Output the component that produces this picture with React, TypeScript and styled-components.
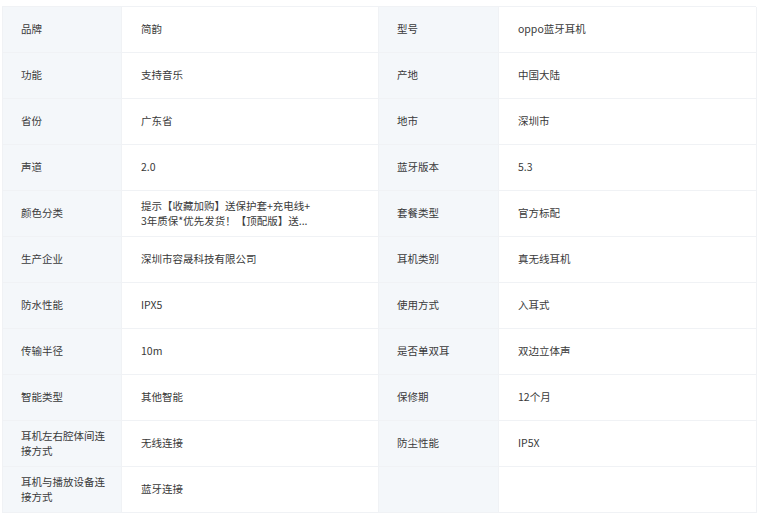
import React from "react";
import styled, { createGlobalStyle } from "styled-components";

const Global = createGlobalStyle`
  html, body { margin: 0; padding: 0; background: #ffffff; }
  body { font-family: "Noto Sans CJK SC", "Noto Sans", sans-serif; }
`;

const Page = styled.div`
  padding: 6px 0 0 2px;
`;

const Table = styled.div`
  display: grid;
  grid-template-columns: 119px 257px 120px 258px;
  grid-auto-rows: 46px;
  width: 754px;
  border-top: 1px solid #f0f2f5;
  border-left: 1px solid #f0f2f5;
  box-sizing: border-box;
`;

const Cell = styled.div<{ $label?: boolean }>`
  display: flex;
  align-items: center;
  box-sizing: border-box;
  padding: ${(p) => (p.$label ? "0 12px 2px 18px" : "0 12px 2px 19px")};
  background: ${(p) => (p.$label ? "#f4f7fa" : "#ffffff")};
  border-right: 1px solid #f0f2f5;
  border-bottom: 1px solid #f0f2f5;
  color: #3a3a3a;
  font-size: 10.5px;
  line-height: 15px;
`;

const Value = styled.span`
  white-space: pre-line;
`;

const rows: [string, string, string, string][] = [
  ["品牌", "简韵", "型号", "oppo蓝牙耳机"],
  ["功能", "支持音乐", "产地", "中国大陆"],
  ["省份", "广东省", "地市", "深圳市"],
  ["声道", "2.0", "蓝牙版本", "5.3"],
  [
    "颜色分类",
    "提示【收藏加购】送保护套+充电线+\n3年质保*优先发货！【顶配版】送...",
    "套餐类型",
    "官方标配",
  ],
  ["生产企业", "深圳市容晟科技有限公司", "耳机类别", "真无线耳机"],
  ["防水性能", "IPX5", "使用方式", "入耳式"],
  ["传输半径", "10m", "是否单双耳", "双边立体声"],
  ["智能类型", "其他智能", "保修期", "12个月"],
  ["耳机左右腔体间连接方式", "无线连接", "防尘性能", "IP5X"],
  ["耳机与播放设备连接方式", "蓝牙连接", "", ""],
];

export default function App() {
  return (
    <>
      <Global />
      <Page>
        <Table>
          {rows.map((r, i) => (
            <React.Fragment key={i}>
              <Cell $label>{r[0]}</Cell>
              <Cell>
                <Value>{r[1]}</Value>
              </Cell>
              <Cell $label>{r[2]}</Cell>
              <Cell>{r[3]}</Cell>
            </React.Fragment>
          ))}
        </Table>
      </Page>
    </>
  );
}
